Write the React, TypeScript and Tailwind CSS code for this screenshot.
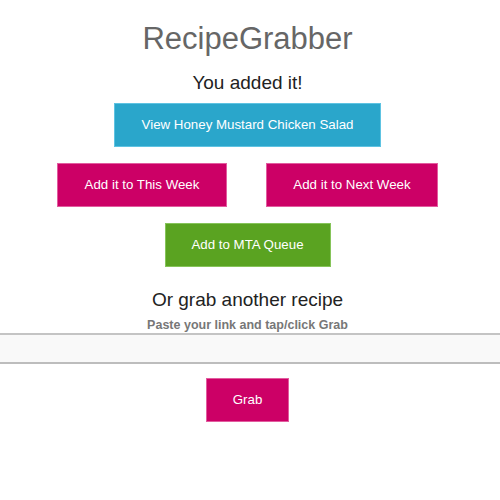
export default function App() {
  const btn =
    "h-[44px] flex items-center justify-center text-[13.3px] text-white border";
  return (
    <div className="min-h-[500px] bg-white font-['Liberation_Sans',Arial,sans-serif]">
      <div className="flex flex-col items-center pr-[5px]">
        <h1 className="mt-[21px] text-[31px] leading-[35px] text-[#666666]">
          RecipeGrabber
        </h1>
        <h3 className="mt-[16px] text-[19px] leading-[22px] text-[#222222]">
          You added it!
        </h3>
        <button
          className={`${btn} mt-[9px] w-[267px] bg-[#2aa6cb] border-[#5ec3e2]`}
        >
          View Honey Mustard Chicken Salad
        </button>
        <div className="mt-[16px] flex gap-[39px]">
          <button
            className={`${btn} w-[170px] bg-[#cc0066] border-[#e25c9f]`}
          >
            Add it to This Week
          </button>
          <button
            className={`${btn} w-[172px] bg-[#cc0066] border-[#e25c9f]`}
          >
            Add it to Next Week
          </button>
        </div>
        <button
          className={`${btn} mt-[16px] w-[166px] bg-[#5aa321] border-[#86c45a]`}
        >
          Add to MTA Queue
        </button>
        <h3 className="mt-[22px] text-[19px] leading-[22px] text-[#222222]">
          Or grab another recipe
        </h3>
        <p className="mt-[7px] text-[12.5px] leading-[15px] font-bold text-[#777777]">
          Paste your link and tap/click Grab
        </p>
      </div>
      <input
        className="block w-full h-[31px] bg-[#f9f9f9] border-t-2 border-b-2 border-t-[#c4c4c4] border-b-[#bdbdbd] outline-none"
        type="text"
      />
      <div className="flex justify-center pr-[5px]">
        <button
          className={`${btn} mt-[14px] w-[83px] bg-[#cc0066] border-[#e25c9f]`}
        >
          Grab
        </button>
      </div>
    </div>
  );
}
